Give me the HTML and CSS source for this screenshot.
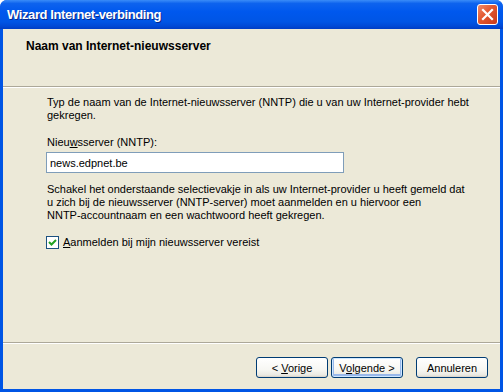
FILE: index.html
```html
<!DOCTYPE html>
<html lang="nl">
<head>
  <meta charset="UTF-8" />
  <title>Wizard Internet-verbinding</title>
  <link rel="stylesheet" href="styles.css">
</head>
<body>
  <div class="window">
    <div class="titlebar">
      <span class="title">Wizard Internet-verbinding</span>
      <span class="close">
        <svg width="13" height="13" viewBox="0 0 13 13">
          <path d="M2 2 L11 11 M11 2 L2 11" stroke="#fff" stroke-width="2.2" stroke-linecap="square" />
        </svg>
      </span>
    </div>

    <div class="frame">
      <div class="header">
        <h2>Naam van Internet-nieuwsserver</h2>
      </div>

      <div class="content">
        <p>Typ de naam van de Internet-nieuwsserver (NNTP) die u van uw Internet-provider hebt<br>gekregen.</p>
        <label class="field-label" for="server">Nieu<u>w</u>sserver (NNTP):</label>
        <input type="text" id="server" value="news.edpnet.be">
        <p class="info">Schakel het onderstaande selectievakje in als uw Internet-provider u heeft gemeld dat<br>u zich bij de nieuwsserver (NNTP-server) moet aanmelden en u hiervoor een<br>NNTP-accountnaam en een wachtwoord heeft gekregen.</p>
        <label class="check">
          <span class="box">
            <svg width="9" height="9" viewBox="0 0 9 9">
              <path d="M1 4 L3.5 6.5 L8 2" fill="none" stroke="#21a121" stroke-width="2" />
            </svg>
          </span>
          <span><u>A</u>anmelden bij mijn nieuwsserver vereist</span>
        </label>
      </div>

      <div class="footer">
        <button>&lt; <u>V</u>orige</button>
        <button class="default">V<u>o</u>lgende &gt;</button>
        <button class="cancel">Annuleren</button>
      </div>
    </div>
  </div>
</body>
</html>
```

FILE: styles.css
```css
body { margin: 0; font-family: 'Liberation Sans', Arial, sans-serif; font-size: 11px; color: #000; }
.window {
  width: 503px; height: 392px; display: flex; flex-direction: column;
  background: #0055e5; border-radius: 7px 7px 0 0; overflow: hidden; box-sizing: border-box;
}
.titlebar {
  height: 29px; flex-shrink: 0; display: flex; align-items: center; justify-content: space-between;
  padding: 0 5px 0 7px;
  background: linear-gradient(#3a8cf8 0%, #0d63ee 12%, #0058ee 40%, #0055e5 75%, #0049d6 90%, #003dc4 100%);
}
.title {
  color: #fff; font-weight: bold; font-size: 13px; font-family: 'Liberation Sans', sans-serif;
  letter-spacing: -0.4px; text-shadow: 1px 1px 0 #0a2a8a;
}
.close {
  width: 19px; height: 19px; border: 1px solid #fff; border-radius: 3px;
  background: linear-gradient(135deg, #f08a6a 0%, #e2572f 45%, #c8391a 100%);
  display: flex; align-items: center; justify-content: center;
}
.frame {
  flex: 1; display: flex; flex-direction: column; background: #ece9d8;
  margin: 0 3px 3px 3px;
}
.header {
  height: 58px; flex-shrink: 0; box-sizing: border-box; padding: 10px 0 0 23px;
  border-bottom: 1px solid #aca899; box-shadow: 0 1px 0 #fff;
}
.header h2 { margin: 0; font-size: 12px; font-weight: bold; }
.content { flex: 1; padding: 9px 0 0 44px; border-bottom: 1px solid #aca899; }
.content p { margin: 0; line-height: 13px; white-space: nowrap; }
.field-label { display: block; margin-top: 14px; line-height: 13px; }
input[type="text"] {
  display: block; margin: 3px 0 0 -1px; width: 298px; height: 21px; box-sizing: border-box;
  border: 1px solid #7f9db9; padding: 2px 3px; font-family: inherit; font-size: 11px;
}
.content .info { margin-top: 10px; }
.check { display: flex; align-items: center; gap: 4px; margin: 14px 0 0 -1px; line-height: 13px; }
.box {
  width: 13px; height: 13px; box-sizing: border-box; border: 1px solid #1c5180; background: #fff;
  display: flex; align-items: center; justify-content: center;
}
.footer {
  height: 46px; flex-shrink: 0; display: flex; align-items: flex-start; justify-content: flex-end;
  padding: 14px 12px 0 0; box-sizing: border-box; box-shadow: inset 0 1px 0 #fff; gap: 3px;
}
button {
  width: 72px; height: 21px; border: 1px solid #003c74; border-radius: 3px; padding: 0;
  background: linear-gradient(#ffffff 0%, #f7f7f3 60%, #eae9e2 90%, #d6d0c5 100%);
  font-family: inherit; font-size: 11px; color: #000;
}
button.default { box-shadow: inset 0 0 0 1px #cee7ff, inset 0 -1px 0 2px #98b8ea; }
button.cancel { margin-left: 10px; }
```
